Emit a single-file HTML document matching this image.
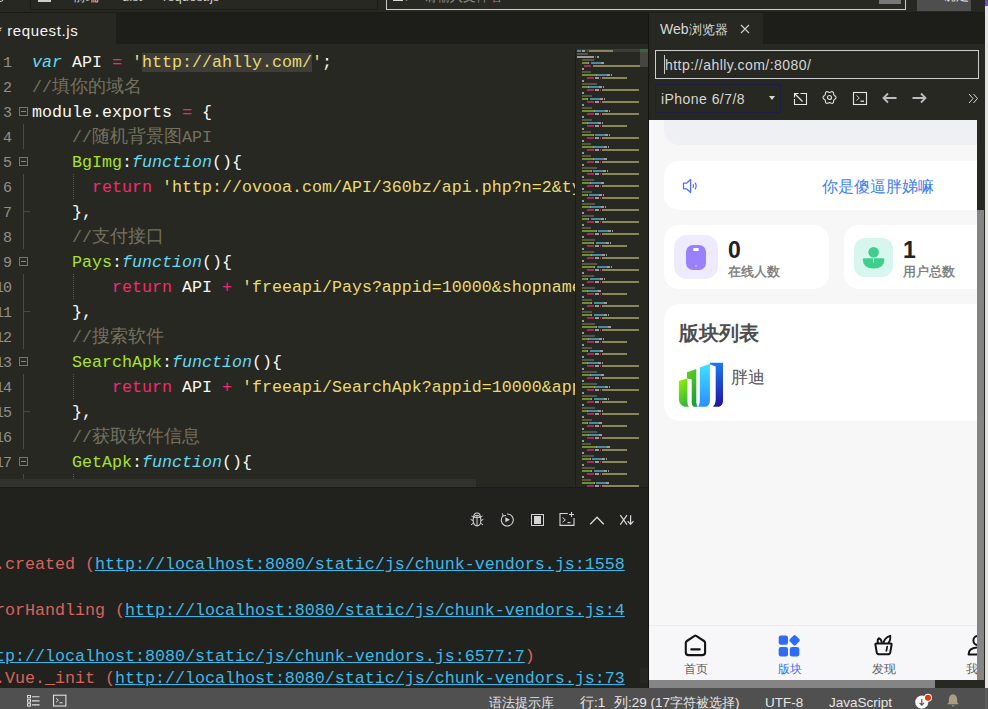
<!DOCTYPE html>
<html><head><meta charset="utf-8">
<style>
*{margin:0;padding:0;box-sizing:border-box}
html,body{width:988px;height:709px;overflow:hidden;background:#272822;font-family:"Liberation Sans",sans-serif}
.a{position:absolute}
.mono{font-family:"Liberation Mono",monospace;font-size:16.66px;white-space:pre;line-height:25px}
.cj{font-size:18px}
.ln{position:absolute;left:-9px;width:20px;text-align:right;color:#90908a;font-family:"Liberation Mono",monospace;font-size:15px;letter-spacing:-1px;line-height:25px;margin-top:2px}
.code{position:absolute;left:32px;color:#f8f8f2;margin-top:1px}
.k{color:#f92672}.s{color:#e6db74}.c{color:#75715e}.f{color:#66d9ef;font-style:italic}.g{color:#a6e22e}
.fold{position:absolute;left:19px;width:9px;height:9px;border:1px solid #75756e}
.fold:after{content:"";position:absolute;left:1px;top:3px;width:5px;height:1px;background:#8a8a84}
.guide{position:absolute;left:23px;width:1px;background:#4a4a44}
.dots{position:absolute;left:73px;width:1px;border-left:1px dotted #5a5a52}
</style></head>
<body>
<!-- top strip -->
<!-- top strip -->
<div class="a" style="left:0;top:0;width:988px;height:12px;background:#272822"></div>
<div class="a" style="left:0;top:12px;width:988px;height:1px;background:#1a1b17"></div>
<div class="a" style="left:-6px;top:-8px;width:11px;height:10px;border:1.5px solid #d8d8d8;border-radius:5px"></div>
<div class="a" style="left:30px;top:-2px;width:348px;height:12px;border:1px solid #1b1c18"></div>
<div class="a" style="left:38px;top:0;width:13px;height:1.5px;background:#cfcfcf"></div>
<div class="a" style="left:73px;top:-11px;font-size:13px;line-height:16px;color:#d0d0d0;white-space:nowrap">前端</div>
<div class="a" style="left:122px;top:-11px;font-size:13px;line-height:16px;color:#d0d0d0;white-space:nowrap">dist</div>
<div class="a" style="left:163px;top:-11px;font-size:13px;line-height:16px;color:#d0d0d0;white-space:nowrap">request.js</div>
<div class="a" style="left:386px;top:-2px;width:520px;height:12px;border:1.5px solid #cdcdcd"></div>
<div class="a" style="left:393px;top:-1px;width:10px;height:2px;border-bottom:1.5px solid #d8d8d8;border-left:1.5px solid #d8d8d8"></div>
<div class="a" style="left:405px;top:-3px;width:3px;height:4px;border-right:1.2px solid #d8d8d8;border-radius:0 0 3px 0"></div>
<div class="a" style="left:424px;top:-11px;font-size:13px;line-height:16px;color:#8a8a8a;white-space:nowrap">请输入文件名</div>
<div class="a" style="left:879px;top:0;width:22px;height:4px;background:#777"></div>
<div class="a" style="left:917px;top:0;width:54px;height:11px;background:#4e4e4e"></div>
<div class="a" style="left:943px;top:-12px;font-size:13px;line-height:16px;color:#e0e0e0;white-space:nowrap">确定</div>

<!-- tab bar -->
<div class="a" style="left:0;top:13px;width:988px;height:31px;background:#1d1e1a"></div>
<div class="a" style="left:0;top:13px;width:116px;height:31px;background:#272822"></div>
<div class="a" style="left:-4px;top:15px;height:30px;line-height:32px;font-size:15px;letter-spacing:0.6px;color:#f4f4f4">* request.js</div>
<!-- editor -->
<div class="a" style="left:0;top:44px;width:648px;height:443px;background:#272822"></div>
<div class="a" style="left:0;top:43px;width:576px;height:436px;overflow:hidden">
<div class="ln" style="top:6px">1</div>
<div class="code mono" style="top:6px"><span class="f">var</span> API <span class="k">=</span> <span class="s">'<span style="background:#3e3d37">http://ahlly.com/</span>'</span>;</div>
<div class="ln" style="top:31px">2</div>
<div class="code mono" style="top:31px"><span class="c">//<span class="cj">填你的域名</span></span></div>
<div class="ln" style="top:56px">3</div>
<div class="code mono" style="top:56px">module.exports <span class="k">=</span> {</div>
<div class="ln" style="top:81px">4</div>
<div class="code mono" style="top:81px">    <span class="c">//<span class="cj">随机背景图</span>API</span></div>
<div class="ln" style="top:106px">5</div>
<div class="code mono" style="top:106px">    <span class="g">BgImg</span>:<span class="f">function</span>(){</div>
<div class="ln" style="top:131px">6</div>
<div class="code mono" style="top:131px">      <span class="k">return</span> <span class="s">'http://ovooa.com/API/360bz/api.php?n=2&amp;type=json'</span></div>
<div class="ln" style="top:156px">7</div>
<div class="code mono" style="top:156px">    },</div>
<div class="ln" style="top:181px">8</div>
<div class="code mono" style="top:181px">    <span class="c">//<span class="cj">支付接口</span></span></div>
<div class="ln" style="top:206px">9</div>
<div class="code mono" style="top:206px">    <span class="g">Pays</span>:<span class="f">function</span>(){</div>
<div class="ln" style="top:231px">10</div>
<div class="code mono" style="top:231px">        <span class="k">return</span> API <span class="k">+</span> <span class="s">'freeapi/Pays?appid=10000&amp;shopname=xxxxxxxx'</span></div>
<div class="ln" style="top:256px">11</div>
<div class="code mono" style="top:256px">    },</div>
<div class="ln" style="top:281px">12</div>
<div class="code mono" style="top:281px">    <span class="c">//<span class="cj">搜索软件</span></span></div>
<div class="ln" style="top:306px">13</div>
<div class="code mono" style="top:306px">    <span class="g">SearchApk</span>:<span class="f">function</span>(){</div>
<div class="ln" style="top:331px">14</div>
<div class="code mono" style="top:331px">        <span class="k">return</span> API <span class="k">+</span> <span class="s">'freeapi/SearchApk?appid=10000&amp;appname=xxxx'</span></div>
<div class="ln" style="top:356px">15</div>
<div class="code mono" style="top:356px">    },</div>
<div class="ln" style="top:381px">16</div>
<div class="code mono" style="top:381px">    <span class="c">//<span class="cj">获取软件信息</span></span></div>
<div class="ln" style="top:406px">17</div>
<div class="code mono" style="top:406px">    <span class="g">GetApk</span>:<span class="f">function</span>(){</div>
<div class="ln" style="top:431px">18</div>
<div class="code mono" style="top:431px">        <span class="k">return</span> API <span class="k">+</span> <span class="s">'freeapi/GetApk?appid=10000'</span></div>
<div class="fold" style="top:64px"></div>
<div class="fold" style="top:114px"></div>
<div class="fold" style="top:214px"></div>
<div class="fold" style="top:314px"></div>
<div class="fold" style="top:414px"></div>
<div class="guide" style="top:81px;height:25px"></div>
<div class="guide" style="top:131px;height:75px"></div>
<div class="guide" style="top:231px;height:75px"></div>
<div class="guide" style="top:331px;height:75px"></div>
<div class="guide" style="top:431px;height:25px"></div>
<div class="a" style="left:24px;top:168px;width:6px;height:1px;background:#4a4a44"></div>
<div class="a" style="left:24px;top:268px;width:6px;height:1px;background:#4a4a44"></div>
<div class="a" style="left:24px;top:368px;width:6px;height:1px;background:#4a4a44"></div>
<div class="dots" style="top:131px;height:25px"></div>
<div class="dots" style="top:231px;height:25px"></div>
<div class="dots" style="top:331px;height:25px"></div>
<div class="dots" style="top:431px;height:25px"></div>
</div>
<div class="a" style="left:575px;top:49px;width:1px;height:438px;background:#1c1d19"></div>
<div class="a" style="left:577px;top:49px;width:63px;height:3px;background:#3d3c37"></div>
<div class="a" style="left:640px;top:49px;width:8px;height:3px;background:#2f6b3b"></div>
<div class="a" style="left:640px;top:52px;width:8px;height:15px;background:#464641"></div>
<div class="a" style="left:577px;top:50px;width:4px;height:2px;background:#478b9d"></div>
<div class="a" style="left:582px;top:50px;width:3px;height:2px;background:#9a9a98"></div>
<div class="a" style="left:587px;top:50px;width:1px;height:2px;background:#9e2f58"></div>
<div class="a" style="left:589px;top:50px;width:24px;height:2px;background:#8b8657"></div>
<div class="a" style="left:577px;top:53px;width:11px;height:2px;background:#57544a"></div>
<div class="a" style="left:577px;top:56px;width:17px;height:2px;background:#9a9a98"></div>
<div class="a" style="left:595px;top:56px;width:1px;height:2px;background:#9e2f58"></div>
<div class="a" style="left:597px;top:56px;width:2px;height:2px;background:#9a9a98"></div>
<div class="a" style="left:582px;top:59px;width:12px;height:2px;background:#57544a"></div>
<div class="a" style="left:582px;top:62px;width:6px;height:2px;background:#6b8f2c"></div>
<div class="a" style="left:588px;top:62px;width:1px;height:2px;background:#9a9a98"></div>
<div class="a" style="left:591px;top:62px;width:10px;height:2px;background:#478b9d"></div>
<div class="a" style="left:601px;top:62px;width:3px;height:2px;background:#9a9a98"></div>
<div class="a" style="left:584px;top:65px;width:7px;height:2px;background:#9e2f58"></div>
<div class="a" style="left:593px;top:65px;width:47px;height:2px;background:#8b8657"></div>
<div class="a" style="left:582px;top:68px;width:2px;height:2px;background:#9a9a98"></div>
<div class="a" style="left:582px;top:71px;width:9px;height:2px;background:#57544a"></div>
<div class="a" style="left:582px;top:74px;width:14px;height:2px;background:#6b8f2c"></div>
<div class="a" style="left:596px;top:74px;width:1px;height:2px;background:#9a9a98"></div>
<div class="a" style="left:597px;top:74px;width:10px;height:2px;background:#478b9d"></div>
<div class="a" style="left:607px;top:74px;width:3px;height:2px;background:#9a9a98"></div>
<div class="a" style="left:611px;top:74px;width:1px;height:2px;background:#9a9a98"></div>
<div class="a" style="left:587px;top:77px;width:7px;height:2px;background:#9e2f58"></div>
<div class="a" style="left:595px;top:77px;width:4px;height:2px;background:#9a9a98"></div>
<div class="a" style="left:600px;top:77px;width:1px;height:2px;background:#9e2f58"></div>
<div class="a" style="left:602px;top:77px;width:25px;height:2px;background:#8b8657"></div>
<div class="a" style="left:582px;top:80px;width:2px;height:2px;background:#9a9a98"></div>
<div class="a" style="left:582px;top:83px;width:15px;height:2px;background:#57544a"></div>
<div class="a" style="left:582px;top:86px;width:6px;height:2px;background:#6b8f2c"></div>
<div class="a" style="left:588px;top:86px;width:1px;height:2px;background:#9a9a98"></div>
<div class="a" style="left:589px;top:86px;width:10px;height:2px;background:#478b9d"></div>
<div class="a" style="left:599px;top:86px;width:3px;height:2px;background:#9a9a98"></div>
<div class="a" style="left:603px;top:86px;width:1px;height:2px;background:#9a9a98"></div>
<div class="a" style="left:587px;top:89px;width:7px;height:2px;background:#9e2f58"></div>
<div class="a" style="left:595px;top:89px;width:4px;height:2px;background:#9a9a98"></div>
<div class="a" style="left:600px;top:89px;width:1px;height:2px;background:#9e2f58"></div>
<div class="a" style="left:602px;top:89px;width:37px;height:2px;background:#8b8657"></div>
<div class="a" style="left:582px;top:92px;width:2px;height:2px;background:#9a9a98"></div>
<div class="a" style="left:582px;top:95px;width:10px;height:2px;background:#57544a"></div>
<div class="a" style="left:582px;top:98px;width:5px;height:2px;background:#6b8f2c"></div>
<div class="a" style="left:587px;top:98px;width:1px;height:2px;background:#9a9a98"></div>
<div class="a" style="left:590px;top:98px;width:10px;height:2px;background:#478b9d"></div>
<div class="a" style="left:600px;top:98px;width:3px;height:2px;background:#9a9a98"></div>
<div class="a" style="left:604px;top:98px;width:1px;height:2px;background:#9a9a98"></div>
<div class="a" style="left:587px;top:101px;width:7px;height:2px;background:#9e2f58"></div>
<div class="a" style="left:595px;top:101px;width:4px;height:2px;background:#9a9a98"></div>
<div class="a" style="left:600px;top:101px;width:1px;height:2px;background:#9e2f58"></div>
<div class="a" style="left:602px;top:101px;width:37px;height:2px;background:#8b8657"></div>
<div class="a" style="left:582px;top:104px;width:2px;height:2px;background:#9a9a98"></div>
<div class="a" style="left:582px;top:107px;width:10px;height:2px;background:#57544a"></div>
<div class="a" style="left:582px;top:110px;width:12px;height:2px;background:#6b8f2c"></div>
<div class="a" style="left:594px;top:110px;width:1px;height:2px;background:#9a9a98"></div>
<div class="a" style="left:595px;top:110px;width:10px;height:2px;background:#478b9d"></div>
<div class="a" style="left:605px;top:110px;width:3px;height:2px;background:#9a9a98"></div>
<div class="a" style="left:609px;top:110px;width:1px;height:2px;background:#9a9a98"></div>
<div class="a" style="left:587px;top:113px;width:7px;height:2px;background:#9e2f58"></div>
<div class="a" style="left:595px;top:113px;width:4px;height:2px;background:#9a9a98"></div>
<div class="a" style="left:600px;top:113px;width:1px;height:2px;background:#9e2f58"></div>
<div class="a" style="left:602px;top:113px;width:37px;height:2px;background:#8b8657"></div>
<div class="a" style="left:582px;top:116px;width:2px;height:2px;background:#9a9a98"></div>
<div class="a" style="left:582px;top:119px;width:10px;height:2px;background:#57544a"></div>
<div class="a" style="left:582px;top:122px;width:5px;height:2px;background:#6b8f2c"></div>
<div class="a" style="left:587px;top:122px;width:1px;height:2px;background:#9a9a98"></div>
<div class="a" style="left:588px;top:122px;width:10px;height:2px;background:#478b9d"></div>
<div class="a" style="left:598px;top:122px;width:3px;height:2px;background:#9a9a98"></div>
<div class="a" style="left:602px;top:122px;width:1px;height:2px;background:#9a9a98"></div>
<div class="a" style="left:587px;top:125px;width:7px;height:2px;background:#9e2f58"></div>
<div class="a" style="left:595px;top:125px;width:4px;height:2px;background:#9a9a98"></div>
<div class="a" style="left:600px;top:125px;width:1px;height:2px;background:#9e2f58"></div>
<div class="a" style="left:602px;top:125px;width:25px;height:2px;background:#8b8657"></div>
<div class="a" style="left:582px;top:128px;width:2px;height:2px;background:#9a9a98"></div>
<div class="a" style="left:582px;top:131px;width:9px;height:2px;background:#57544a"></div>
<div class="a" style="left:582px;top:134px;width:11px;height:2px;background:#6b8f2c"></div>
<div class="a" style="left:593px;top:134px;width:1px;height:2px;background:#9a9a98"></div>
<div class="a" style="left:595px;top:134px;width:10px;height:2px;background:#478b9d"></div>
<div class="a" style="left:605px;top:134px;width:3px;height:2px;background:#9a9a98"></div>
<div class="a" style="left:609px;top:134px;width:1px;height:2px;background:#9a9a98"></div>
<div class="a" style="left:587px;top:137px;width:7px;height:2px;background:#9e2f58"></div>
<div class="a" style="left:595px;top:137px;width:4px;height:2px;background:#9a9a98"></div>
<div class="a" style="left:600px;top:137px;width:1px;height:2px;background:#9e2f58"></div>
<div class="a" style="left:602px;top:137px;width:37px;height:2px;background:#8b8657"></div>
<div class="a" style="left:582px;top:140px;width:2px;height:2px;background:#9a9a98"></div>
<div class="a" style="left:582px;top:143px;width:9px;height:2px;background:#57544a"></div>
<div class="a" style="left:582px;top:146px;width:11px;height:2px;background:#6b8f2c"></div>
<div class="a" style="left:593px;top:146px;width:1px;height:2px;background:#9a9a98"></div>
<div class="a" style="left:594px;top:146px;width:10px;height:2px;background:#478b9d"></div>
<div class="a" style="left:604px;top:146px;width:3px;height:2px;background:#9a9a98"></div>
<div class="a" style="left:608px;top:146px;width:1px;height:2px;background:#9a9a98"></div>
<div class="a" style="left:587px;top:149px;width:7px;height:2px;background:#9e2f58"></div>
<div class="a" style="left:595px;top:149px;width:4px;height:2px;background:#9a9a98"></div>
<div class="a" style="left:600px;top:149px;width:1px;height:2px;background:#9e2f58"></div>
<div class="a" style="left:602px;top:149px;width:37px;height:2px;background:#8b8657"></div>
<div class="a" style="left:582px;top:152px;width:2px;height:2px;background:#9a9a98"></div>
<div class="a" style="left:582px;top:155px;width:9px;height:2px;background:#57544a"></div>
<div class="a" style="left:582px;top:158px;width:11px;height:2px;background:#6b8f2c"></div>
<div class="a" style="left:593px;top:158px;width:1px;height:2px;background:#9a9a98"></div>
<div class="a" style="left:594px;top:158px;width:10px;height:2px;background:#478b9d"></div>
<div class="a" style="left:604px;top:158px;width:3px;height:2px;background:#9a9a98"></div>
<div class="a" style="left:587px;top:161px;width:7px;height:2px;background:#9e2f58"></div>
<div class="a" style="left:595px;top:161px;width:4px;height:2px;background:#9a9a98"></div>
<div class="a" style="left:600px;top:161px;width:1px;height:2px;background:#9e2f58"></div>
<div class="a" style="left:602px;top:161px;width:37px;height:2px;background:#8b8657"></div>
<div class="a" style="left:582px;top:164px;width:2px;height:2px;background:#9a9a98"></div>
<div class="a" style="left:582px;top:167px;width:15px;height:2px;background:#57544a"></div>
<div class="a" style="left:582px;top:170px;width:9px;height:2px;background:#6b8f2c"></div>
<div class="a" style="left:591px;top:170px;width:1px;height:2px;background:#9a9a98"></div>
<div class="a" style="left:593px;top:170px;width:10px;height:2px;background:#478b9d"></div>
<div class="a" style="left:603px;top:170px;width:3px;height:2px;background:#9a9a98"></div>
<div class="a" style="left:607px;top:170px;width:1px;height:2px;background:#9a9a98"></div>
<div class="a" style="left:587px;top:173px;width:7px;height:2px;background:#9e2f58"></div>
<div class="a" style="left:595px;top:173px;width:4px;height:2px;background:#9a9a98"></div>
<div class="a" style="left:600px;top:173px;width:1px;height:2px;background:#9e2f58"></div>
<div class="a" style="left:602px;top:173px;width:37px;height:2px;background:#8b8657"></div>
<div class="a" style="left:582px;top:176px;width:2px;height:2px;background:#9a9a98"></div>
<div class="a" style="left:582px;top:179px;width:12px;height:2px;background:#57544a"></div>
<div class="a" style="left:582px;top:182px;width:8px;height:2px;background:#6b8f2c"></div>
<div class="a" style="left:590px;top:182px;width:1px;height:2px;background:#9a9a98"></div>
<div class="a" style="left:591px;top:182px;width:10px;height:2px;background:#478b9d"></div>
<div class="a" style="left:601px;top:182px;width:3px;height:2px;background:#9a9a98"></div>
<div class="a" style="left:587px;top:185px;width:7px;height:2px;background:#9e2f58"></div>
<div class="a" style="left:595px;top:185px;width:4px;height:2px;background:#9a9a98"></div>
<div class="a" style="left:600px;top:185px;width:1px;height:2px;background:#9e2f58"></div>
<div class="a" style="left:602px;top:185px;width:37px;height:2px;background:#8b8657"></div>
<div class="a" style="left:582px;top:188px;width:2px;height:2px;background:#9a9a98"></div>
<div class="a" style="left:582px;top:191px;width:10px;height:2px;background:#57544a"></div>
<div class="a" style="left:582px;top:194px;width:5px;height:2px;background:#6b8f2c"></div>
<div class="a" style="left:587px;top:194px;width:1px;height:2px;background:#9a9a98"></div>
<div class="a" style="left:589px;top:194px;width:10px;height:2px;background:#478b9d"></div>
<div class="a" style="left:599px;top:194px;width:3px;height:2px;background:#9a9a98"></div>
<div class="a" style="left:603px;top:194px;width:1px;height:2px;background:#9a9a98"></div>
<div class="a" style="left:587px;top:197px;width:7px;height:2px;background:#9e2f58"></div>
<div class="a" style="left:595px;top:197px;width:4px;height:2px;background:#9a9a98"></div>
<div class="a" style="left:600px;top:197px;width:1px;height:2px;background:#9e2f58"></div>
<div class="a" style="left:602px;top:197px;width:37px;height:2px;background:#8b8657"></div>
<div class="a" style="left:582px;top:200px;width:2px;height:2px;background:#9a9a98"></div>
<div class="a" style="left:582px;top:203px;width:13px;height:2px;background:#57544a"></div>
<div class="a" style="left:582px;top:206px;width:8px;height:2px;background:#6b8f2c"></div>
<div class="a" style="left:590px;top:206px;width:1px;height:2px;background:#9a9a98"></div>
<div class="a" style="left:591px;top:206px;width:10px;height:2px;background:#478b9d"></div>
<div class="a" style="left:601px;top:206px;width:3px;height:2px;background:#9a9a98"></div>
<div class="a" style="left:605px;top:206px;width:1px;height:2px;background:#9a9a98"></div>
<div class="a" style="left:587px;top:209px;width:7px;height:2px;background:#9e2f58"></div>
<div class="a" style="left:595px;top:209px;width:4px;height:2px;background:#9a9a98"></div>
<div class="a" style="left:600px;top:209px;width:1px;height:2px;background:#9e2f58"></div>
<div class="a" style="left:602px;top:209px;width:37px;height:2px;background:#8b8657"></div>
<div class="a" style="left:582px;top:212px;width:2px;height:2px;background:#9a9a98"></div>
<div class="a" style="left:582px;top:215px;width:12px;height:2px;background:#57544a"></div>
<div class="a" style="left:582px;top:218px;width:6px;height:2px;background:#6b8f2c"></div>
<div class="a" style="left:588px;top:218px;width:1px;height:2px;background:#9a9a98"></div>
<div class="a" style="left:591px;top:218px;width:10px;height:2px;background:#478b9d"></div>
<div class="a" style="left:601px;top:218px;width:3px;height:2px;background:#9a9a98"></div>
<div class="a" style="left:605px;top:218px;width:1px;height:2px;background:#9a9a98"></div>
<div class="a" style="left:587px;top:221px;width:7px;height:2px;background:#9e2f58"></div>
<div class="a" style="left:595px;top:221px;width:4px;height:2px;background:#9a9a98"></div>
<div class="a" style="left:600px;top:221px;width:1px;height:2px;background:#9e2f58"></div>
<div class="a" style="left:602px;top:221px;width:37px;height:2px;background:#8b8657"></div>
<div class="a" style="left:582px;top:224px;width:2px;height:2px;background:#9a9a98"></div>
<div class="a" style="left:582px;top:227px;width:9px;height:2px;background:#57544a"></div>
<div class="a" style="left:582px;top:230px;width:14px;height:2px;background:#6b8f2c"></div>
<div class="a" style="left:596px;top:230px;width:1px;height:2px;background:#9a9a98"></div>
<div class="a" style="left:598px;top:230px;width:10px;height:2px;background:#478b9d"></div>
<div class="a" style="left:608px;top:230px;width:3px;height:2px;background:#9a9a98"></div>
<div class="a" style="left:612px;top:230px;width:1px;height:2px;background:#9a9a98"></div>
<div class="a" style="left:587px;top:233px;width:7px;height:2px;background:#9e2f58"></div>
<div class="a" style="left:595px;top:233px;width:4px;height:2px;background:#9a9a98"></div>
<div class="a" style="left:600px;top:233px;width:1px;height:2px;background:#9e2f58"></div>
<div class="a" style="left:602px;top:233px;width:37px;height:2px;background:#8b8657"></div>
<div class="a" style="left:582px;top:236px;width:2px;height:2px;background:#9a9a98"></div>
<div class="a" style="left:582px;top:239px;width:13px;height:2px;background:#57544a"></div>
<div class="a" style="left:582px;top:242px;width:11px;height:2px;background:#6b8f2c"></div>
<div class="a" style="left:593px;top:242px;width:1px;height:2px;background:#9a9a98"></div>
<div class="a" style="left:596px;top:242px;width:10px;height:2px;background:#478b9d"></div>
<div class="a" style="left:606px;top:242px;width:3px;height:2px;background:#9a9a98"></div>
<div class="a" style="left:610px;top:242px;width:1px;height:2px;background:#9a9a98"></div>
<div class="a" style="left:587px;top:245px;width:7px;height:2px;background:#9e2f58"></div>
<div class="a" style="left:595px;top:245px;width:4px;height:2px;background:#9a9a98"></div>
<div class="a" style="left:600px;top:245px;width:1px;height:2px;background:#9e2f58"></div>
<div class="a" style="left:602px;top:245px;width:25px;height:2px;background:#8b8657"></div>
<div class="a" style="left:582px;top:248px;width:2px;height:2px;background:#9a9a98"></div>
<div class="a" style="left:582px;top:251px;width:12px;height:2px;background:#57544a"></div>
<div class="a" style="left:582px;top:254px;width:9px;height:2px;background:#6b8f2c"></div>
<div class="a" style="left:591px;top:254px;width:1px;height:2px;background:#9a9a98"></div>
<div class="a" style="left:592px;top:254px;width:10px;height:2px;background:#478b9d"></div>
<div class="a" style="left:602px;top:254px;width:3px;height:2px;background:#9a9a98"></div>
<div class="a" style="left:606px;top:254px;width:1px;height:2px;background:#9a9a98"></div>
<div class="a" style="left:587px;top:257px;width:7px;height:2px;background:#9e2f58"></div>
<div class="a" style="left:595px;top:257px;width:4px;height:2px;background:#9a9a98"></div>
<div class="a" style="left:600px;top:257px;width:1px;height:2px;background:#9e2f58"></div>
<div class="a" style="left:602px;top:257px;width:37px;height:2px;background:#8b8657"></div>
<div class="a" style="left:582px;top:260px;width:2px;height:2px;background:#9a9a98"></div>
<div class="a" style="left:582px;top:263px;width:15px;height:2px;background:#57544a"></div>
<div class="a" style="left:582px;top:266px;width:12px;height:2px;background:#6b8f2c"></div>
<div class="a" style="left:594px;top:266px;width:1px;height:2px;background:#9a9a98"></div>
<div class="a" style="left:597px;top:266px;width:10px;height:2px;background:#478b9d"></div>
<div class="a" style="left:607px;top:266px;width:3px;height:2px;background:#9a9a98"></div>
<div class="a" style="left:611px;top:266px;width:1px;height:2px;background:#9a9a98"></div>
<div class="a" style="left:587px;top:269px;width:7px;height:2px;background:#9e2f58"></div>
<div class="a" style="left:595px;top:269px;width:4px;height:2px;background:#9a9a98"></div>
<div class="a" style="left:600px;top:269px;width:1px;height:2px;background:#9e2f58"></div>
<div class="a" style="left:602px;top:269px;width:37px;height:2px;background:#8b8657"></div>
<div class="a" style="left:582px;top:272px;width:2px;height:2px;background:#9a9a98"></div>
<div class="a" style="left:582px;top:275px;width:12px;height:2px;background:#57544a"></div>
<div class="a" style="left:582px;top:278px;width:5px;height:2px;background:#6b8f2c"></div>
<div class="a" style="left:587px;top:278px;width:1px;height:2px;background:#9a9a98"></div>
<div class="a" style="left:590px;top:278px;width:10px;height:2px;background:#478b9d"></div>
<div class="a" style="left:600px;top:278px;width:3px;height:2px;background:#9a9a98"></div>
<div class="a" style="left:604px;top:278px;width:1px;height:2px;background:#9a9a98"></div>
<div class="a" style="left:587px;top:281px;width:7px;height:2px;background:#9e2f58"></div>
<div class="a" style="left:595px;top:281px;width:4px;height:2px;background:#9a9a98"></div>
<div class="a" style="left:600px;top:281px;width:1px;height:2px;background:#9e2f58"></div>
<div class="a" style="left:602px;top:281px;width:37px;height:2px;background:#8b8657"></div>
<div class="a" style="left:582px;top:284px;width:2px;height:2px;background:#9a9a98"></div>
<div class="a" style="left:582px;top:287px;width:13px;height:2px;background:#57544a"></div>
<div class="a" style="left:582px;top:290px;width:5px;height:2px;background:#6b8f2c"></div>
<div class="a" style="left:587px;top:290px;width:1px;height:2px;background:#9a9a98"></div>
<div class="a" style="left:588px;top:290px;width:10px;height:2px;background:#478b9d"></div>
<div class="a" style="left:598px;top:290px;width:3px;height:2px;background:#9a9a98"></div>
<div class="a" style="left:587px;top:293px;width:7px;height:2px;background:#9e2f58"></div>
<div class="a" style="left:595px;top:293px;width:4px;height:2px;background:#9a9a98"></div>
<div class="a" style="left:600px;top:293px;width:1px;height:2px;background:#9e2f58"></div>
<div class="a" style="left:602px;top:293px;width:25px;height:2px;background:#8b8657"></div>
<div class="a" style="left:582px;top:296px;width:2px;height:2px;background:#9a9a98"></div>
<div class="a" style="left:582px;top:299px;width:10px;height:2px;background:#57544a"></div>
<div class="a" style="left:582px;top:302px;width:9px;height:2px;background:#6b8f2c"></div>
<div class="a" style="left:591px;top:302px;width:1px;height:2px;background:#9a9a98"></div>
<div class="a" style="left:594px;top:302px;width:10px;height:2px;background:#478b9d"></div>
<div class="a" style="left:604px;top:302px;width:3px;height:2px;background:#9a9a98"></div>
<div class="a" style="left:587px;top:305px;width:7px;height:2px;background:#9e2f58"></div>
<div class="a" style="left:595px;top:305px;width:4px;height:2px;background:#9a9a98"></div>
<div class="a" style="left:600px;top:305px;width:1px;height:2px;background:#9e2f58"></div>
<div class="a" style="left:602px;top:305px;width:37px;height:2px;background:#8b8657"></div>
<div class="a" style="left:582px;top:308px;width:2px;height:2px;background:#9a9a98"></div>
<div class="a" style="left:582px;top:311px;width:10px;height:2px;background:#57544a"></div>
<div class="a" style="left:582px;top:314px;width:9px;height:2px;background:#6b8f2c"></div>
<div class="a" style="left:591px;top:314px;width:1px;height:2px;background:#9a9a98"></div>
<div class="a" style="left:594px;top:314px;width:10px;height:2px;background:#478b9d"></div>
<div class="a" style="left:604px;top:314px;width:3px;height:2px;background:#9a9a98"></div>
<div class="a" style="left:608px;top:314px;width:1px;height:2px;background:#9a9a98"></div>
<div class="a" style="left:587px;top:317px;width:7px;height:2px;background:#9e2f58"></div>
<div class="a" style="left:595px;top:317px;width:4px;height:2px;background:#9a9a98"></div>
<div class="a" style="left:600px;top:317px;width:1px;height:2px;background:#9e2f58"></div>
<div class="a" style="left:602px;top:317px;width:37px;height:2px;background:#8b8657"></div>
<div class="a" style="left:582px;top:320px;width:2px;height:2px;background:#9a9a98"></div>
<div class="a" style="left:582px;top:323px;width:13px;height:2px;background:#57544a"></div>
<div class="a" style="left:582px;top:326px;width:14px;height:2px;background:#6b8f2c"></div>
<div class="a" style="left:596px;top:326px;width:1px;height:2px;background:#9a9a98"></div>
<div class="a" style="left:598px;top:326px;width:10px;height:2px;background:#478b9d"></div>
<div class="a" style="left:608px;top:326px;width:3px;height:2px;background:#9a9a98"></div>
<div class="a" style="left:587px;top:329px;width:7px;height:2px;background:#9e2f58"></div>
<div class="a" style="left:595px;top:329px;width:4px;height:2px;background:#9a9a98"></div>
<div class="a" style="left:600px;top:329px;width:1px;height:2px;background:#9e2f58"></div>
<div class="a" style="left:602px;top:329px;width:37px;height:2px;background:#8b8657"></div>
<div class="a" style="left:582px;top:332px;width:2px;height:2px;background:#9a9a98"></div>
<div class="a" style="left:582px;top:335px;width:13px;height:2px;background:#57544a"></div>
<div class="a" style="left:582px;top:338px;width:6px;height:2px;background:#6b8f2c"></div>
<div class="a" style="left:588px;top:338px;width:1px;height:2px;background:#9a9a98"></div>
<div class="a" style="left:589px;top:338px;width:10px;height:2px;background:#478b9d"></div>
<div class="a" style="left:599px;top:338px;width:3px;height:2px;background:#9a9a98"></div>
<div class="a" style="left:603px;top:338px;width:1px;height:2px;background:#9a9a98"></div>
<div class="a" style="left:587px;top:341px;width:7px;height:2px;background:#9e2f58"></div>
<div class="a" style="left:595px;top:341px;width:4px;height:2px;background:#9a9a98"></div>
<div class="a" style="left:600px;top:341px;width:1px;height:2px;background:#9e2f58"></div>
<div class="a" style="left:602px;top:341px;width:25px;height:2px;background:#8b8657"></div>
<div class="a" style="left:582px;top:344px;width:2px;height:2px;background:#9a9a98"></div>
<div class="a" style="left:582px;top:347px;width:10px;height:2px;background:#57544a"></div>
<div class="a" style="left:582px;top:350px;width:5px;height:2px;background:#6b8f2c"></div>
<div class="a" style="left:587px;top:350px;width:1px;height:2px;background:#9a9a98"></div>
<div class="a" style="left:590px;top:350px;width:10px;height:2px;background:#478b9d"></div>
<div class="a" style="left:600px;top:350px;width:3px;height:2px;background:#9a9a98"></div>
<div class="a" style="left:587px;top:353px;width:7px;height:2px;background:#9e2f58"></div>
<div class="a" style="left:595px;top:353px;width:4px;height:2px;background:#9a9a98"></div>
<div class="a" style="left:600px;top:353px;width:1px;height:2px;background:#9e2f58"></div>
<div class="a" style="left:602px;top:353px;width:25px;height:2px;background:#8b8657"></div>
<div class="a" style="left:582px;top:356px;width:2px;height:2px;background:#9a9a98"></div>
<div class="a" style="left:582px;top:359px;width:12px;height:2px;background:#57544a"></div>
<div class="a" style="left:582px;top:362px;width:5px;height:2px;background:#6b8f2c"></div>
<div class="a" style="left:587px;top:362px;width:1px;height:2px;background:#9a9a98"></div>
<div class="a" style="left:588px;top:362px;width:10px;height:2px;background:#478b9d"></div>
<div class="a" style="left:598px;top:362px;width:3px;height:2px;background:#9a9a98"></div>
<div class="a" style="left:602px;top:362px;width:1px;height:2px;background:#9a9a98"></div>
<div class="a" style="left:587px;top:365px;width:7px;height:2px;background:#9e2f58"></div>
<div class="a" style="left:595px;top:365px;width:4px;height:2px;background:#9a9a98"></div>
<div class="a" style="left:600px;top:365px;width:1px;height:2px;background:#9e2f58"></div>
<div class="a" style="left:602px;top:365px;width:37px;height:2px;background:#8b8657"></div>
<div class="a" style="left:582px;top:368px;width:2px;height:2px;background:#9a9a98"></div>
<div class="a" style="left:582px;top:371px;width:15px;height:2px;background:#57544a"></div>
<div class="a" style="left:582px;top:374px;width:8px;height:2px;background:#6b8f2c"></div>
<div class="a" style="left:590px;top:374px;width:1px;height:2px;background:#9a9a98"></div>
<div class="a" style="left:591px;top:374px;width:10px;height:2px;background:#478b9d"></div>
<div class="a" style="left:601px;top:374px;width:3px;height:2px;background:#9a9a98"></div>
<div class="a" style="left:587px;top:377px;width:7px;height:2px;background:#9e2f58"></div>
<div class="a" style="left:595px;top:377px;width:4px;height:2px;background:#9a9a98"></div>
<div class="a" style="left:600px;top:377px;width:1px;height:2px;background:#9e2f58"></div>
<div class="a" style="left:602px;top:377px;width:37px;height:2px;background:#8b8657"></div>
<div class="a" style="left:582px;top:380px;width:2px;height:2px;background:#9a9a98"></div>
<div class="a" style="left:582px;top:383px;width:15px;height:2px;background:#57544a"></div>
<div class="a" style="left:582px;top:386px;width:12px;height:2px;background:#6b8f2c"></div>
<div class="a" style="left:594px;top:386px;width:1px;height:2px;background:#9a9a98"></div>
<div class="a" style="left:595px;top:386px;width:10px;height:2px;background:#478b9d"></div>
<div class="a" style="left:605px;top:386px;width:3px;height:2px;background:#9a9a98"></div>
<div class="a" style="left:609px;top:386px;width:1px;height:2px;background:#9a9a98"></div>
<div class="a" style="left:587px;top:389px;width:7px;height:2px;background:#9e2f58"></div>
<div class="a" style="left:595px;top:389px;width:4px;height:2px;background:#9a9a98"></div>
<div class="a" style="left:600px;top:389px;width:1px;height:2px;background:#9e2f58"></div>
<div class="a" style="left:602px;top:389px;width:37px;height:2px;background:#8b8657"></div>
<div class="a" style="left:582px;top:392px;width:2px;height:2px;background:#9a9a98"></div>
<div class="a" style="left:582px;top:395px;width:15px;height:2px;background:#57544a"></div>
<div class="a" style="left:582px;top:398px;width:9px;height:2px;background:#6b8f2c"></div>
<div class="a" style="left:591px;top:398px;width:1px;height:2px;background:#9a9a98"></div>
<div class="a" style="left:594px;top:398px;width:10px;height:2px;background:#478b9d"></div>
<div class="a" style="left:604px;top:398px;width:3px;height:2px;background:#9a9a98"></div>
<div class="a" style="left:608px;top:398px;width:1px;height:2px;background:#9a9a98"></div>
<div class="a" style="left:587px;top:401px;width:7px;height:2px;background:#9e2f58"></div>
<div class="a" style="left:595px;top:401px;width:4px;height:2px;background:#9a9a98"></div>
<div class="a" style="left:600px;top:401px;width:1px;height:2px;background:#9e2f58"></div>
<div class="a" style="left:602px;top:401px;width:25px;height:2px;background:#8b8657"></div>
<div class="a" style="left:582px;top:404px;width:2px;height:2px;background:#9a9a98"></div>
<div class="a" style="left:582px;top:407px;width:13px;height:2px;background:#57544a"></div>
<div class="a" style="left:582px;top:410px;width:5px;height:2px;background:#6b8f2c"></div>
<div class="a" style="left:587px;top:410px;width:1px;height:2px;background:#9a9a98"></div>
<div class="a" style="left:588px;top:410px;width:10px;height:2px;background:#478b9d"></div>
<div class="a" style="left:598px;top:410px;width:3px;height:2px;background:#9a9a98"></div>
<div class="a" style="left:602px;top:410px;width:1px;height:2px;background:#9a9a98"></div>
<div class="a" style="left:587px;top:413px;width:7px;height:2px;background:#9e2f58"></div>
<div class="a" style="left:595px;top:413px;width:4px;height:2px;background:#9a9a98"></div>
<div class="a" style="left:600px;top:413px;width:1px;height:2px;background:#9e2f58"></div>
<div class="a" style="left:602px;top:413px;width:37px;height:2px;background:#8b8657"></div>
<div class="a" style="left:582px;top:416px;width:2px;height:2px;background:#9a9a98"></div>
<div class="a" style="left:582px;top:419px;width:10px;height:2px;background:#57544a"></div>
<div class="a" style="left:582px;top:422px;width:5px;height:2px;background:#6b8f2c"></div>
<div class="a" style="left:587px;top:422px;width:1px;height:2px;background:#9a9a98"></div>
<div class="a" style="left:589px;top:422px;width:10px;height:2px;background:#478b9d"></div>
<div class="a" style="left:599px;top:422px;width:3px;height:2px;background:#9a9a98"></div>
<div class="a" style="left:587px;top:425px;width:7px;height:2px;background:#9e2f58"></div>
<div class="a" style="left:595px;top:425px;width:4px;height:2px;background:#9a9a98"></div>
<div class="a" style="left:600px;top:425px;width:1px;height:2px;background:#9e2f58"></div>
<div class="a" style="left:602px;top:425px;width:25px;height:2px;background:#8b8657"></div>
<div class="a" style="left:582px;top:428px;width:2px;height:2px;background:#9a9a98"></div>
<div class="a" style="left:582px;top:431px;width:15px;height:2px;background:#57544a"></div>
<div class="a" style="left:582px;top:434px;width:6px;height:2px;background:#6b8f2c"></div>
<div class="a" style="left:588px;top:434px;width:1px;height:2px;background:#9a9a98"></div>
<div class="a" style="left:589px;top:434px;width:10px;height:2px;background:#478b9d"></div>
<div class="a" style="left:599px;top:434px;width:3px;height:2px;background:#9a9a98"></div>
<div class="a" style="left:587px;top:437px;width:7px;height:2px;background:#9e2f58"></div>
<div class="a" style="left:595px;top:437px;width:4px;height:2px;background:#9a9a98"></div>
<div class="a" style="left:600px;top:437px;width:1px;height:2px;background:#9e2f58"></div>
<div class="a" style="left:602px;top:437px;width:37px;height:2px;background:#8b8657"></div>
<div class="a" style="left:582px;top:440px;width:2px;height:2px;background:#9a9a98"></div>
<div class="a" style="left:582px;top:443px;width:9px;height:2px;background:#57544a"></div>
<div class="a" style="left:582px;top:446px;width:14px;height:2px;background:#6b8f2c"></div>
<div class="a" style="left:596px;top:446px;width:1px;height:2px;background:#9a9a98"></div>
<div class="a" style="left:597px;top:446px;width:10px;height:2px;background:#478b9d"></div>
<div class="a" style="left:607px;top:446px;width:3px;height:2px;background:#9a9a98"></div>
<div class="a" style="left:587px;top:449px;width:7px;height:2px;background:#9e2f58"></div>
<div class="a" style="left:595px;top:449px;width:4px;height:2px;background:#9a9a98"></div>
<div class="a" style="left:600px;top:449px;width:1px;height:2px;background:#9e2f58"></div>
<div class="a" style="left:602px;top:449px;width:25px;height:2px;background:#8b8657"></div>
<div class="a" style="left:582px;top:452px;width:2px;height:2px;background:#9a9a98"></div>
<div class="a" style="left:582px;top:455px;width:12px;height:2px;background:#57544a"></div>
<div class="a" style="left:582px;top:458px;width:8px;height:2px;background:#6b8f2c"></div>
<div class="a" style="left:590px;top:458px;width:1px;height:2px;background:#9a9a98"></div>
<div class="a" style="left:592px;top:458px;width:10px;height:2px;background:#478b9d"></div>
<div class="a" style="left:602px;top:458px;width:3px;height:2px;background:#9a9a98"></div>
<div class="a" style="left:606px;top:458px;width:1px;height:2px;background:#9a9a98"></div>
<div class="a" style="left:587px;top:461px;width:7px;height:2px;background:#9e2f58"></div>
<div class="a" style="left:595px;top:461px;width:4px;height:2px;background:#9a9a98"></div>
<div class="a" style="left:600px;top:461px;width:1px;height:2px;background:#9e2f58"></div>
<div class="a" style="left:602px;top:461px;width:25px;height:2px;background:#8b8657"></div>
<div class="a" style="left:582px;top:464px;width:2px;height:2px;background:#9a9a98"></div>
<div class="a" style="left:582px;top:467px;width:13px;height:2px;background:#57544a"></div>
<div class="a" style="left:582px;top:470px;width:9px;height:2px;background:#6b8f2c"></div>
<div class="a" style="left:591px;top:470px;width:1px;height:2px;background:#9a9a98"></div>
<div class="a" style="left:594px;top:470px;width:10px;height:2px;background:#478b9d"></div>
<div class="a" style="left:604px;top:470px;width:3px;height:2px;background:#9a9a98"></div>
<div class="a" style="left:608px;top:470px;width:1px;height:2px;background:#9a9a98"></div>
<div class="a" style="left:587px;top:473px;width:7px;height:2px;background:#9e2f58"></div>
<div class="a" style="left:595px;top:473px;width:4px;height:2px;background:#9a9a98"></div>
<div class="a" style="left:600px;top:473px;width:1px;height:2px;background:#9e2f58"></div>
<div class="a" style="left:602px;top:473px;width:25px;height:2px;background:#8b8657"></div>
<div class="a" style="left:582px;top:476px;width:2px;height:2px;background:#9a9a98"></div>
<div class="a" style="left:582px;top:479px;width:9px;height:2px;background:#57544a"></div>
<div class="a" style="left:582px;top:482px;width:12px;height:2px;background:#6b8f2c"></div>
<div class="a" style="left:594px;top:482px;width:1px;height:2px;background:#9a9a98"></div>
<div class="a" style="left:596px;top:482px;width:10px;height:2px;background:#478b9d"></div>
<div class="a" style="left:606px;top:482px;width:3px;height:2px;background:#9a9a98"></div>
<div class="a" style="left:587px;top:485px;width:7px;height:2px;background:#9e2f58"></div>
<div class="a" style="left:595px;top:485px;width:4px;height:2px;background:#9a9a98"></div>
<div class="a" style="left:600px;top:485px;width:1px;height:2px;background:#9e2f58"></div>
<div class="a" style="left:602px;top:485px;width:37px;height:2px;background:#8b8657"></div>
<div class="a" style="left:0;top:479px;width:476px;height:8px;background:#31322d"></div>

<!-- console -->
<!-- console -->
<div class="a" style="left:0;top:487px;width:649px;height:201px;background:#21221d;overflow:hidden">
<svg class="a" style="left:468px;top:24px" width="18" height="18" viewBox="0 0 18 18">
 <path d="M5.6 6.2Q5.8 2 9 2Q12.2 2 12.4 6.2" fill="none" stroke="#d4d4d4" stroke-width="1.1"/>
 <ellipse cx="9" cy="9.6" rx="3.9" ry="5.3" fill="none" stroke="#d4d4d4" stroke-width="1.1"/>
 <path d="M9 4.6V14.9M5.4 6.3H12.6M5 9.5L2.6 8.4M13 9.5L15.4 8.4M5.2 12.3L3 13.8M12.8 12.3L15 13.8M5.6 6.4L3.4 5M12.4 6.4L14.6 5" stroke="#d4d4d4" stroke-width="1"/>
</svg>
<svg class="a" style="left:498px;top:24px" width="18" height="18" viewBox="0 0 18 18">
 <path d="M5.2 4.6A6 6 0 1 0 9 3" fill="none" stroke="#d4d4d4" stroke-width="1.1"/>
 <path d="M4.4 2.4L5.3 5L8 4.4" fill="none" stroke="#d4d4d4" stroke-width="1"/>
 <path d="M7.4 6.2L11.8 8.7L7.4 11.2Z" fill="#d8d8d8"/>
</svg>
<div class="a" style="left:531px;top:26.5px;width:12.5px;height:12.5px;border:1.3px solid #d4d4d4"></div>
<div class="a" style="left:533.5px;top:29px;width:7.5px;height:7.5px;background:#d6d6d6"></div>
<svg class="a" style="left:558px;top:25px" width="18" height="16" viewBox="0 0 18 16">
 <path d="M9.8 1.5H2V13.4H16V6" fill="none" stroke="#d8d8d8" stroke-width="1.1"/>
 <path d="M13.5 0V5M11 2.5H16" stroke="#d8d8d8" stroke-width="1.1"/>
 <path d="M4.6 5.6L7.3 7.9L4.6 10.2" fill="none" stroke="#d8d8d8" stroke-width="1"/>
 <path d="M9.5 10.6H12.5" stroke="#d8d8d8" stroke-width="1.1"/>
</svg>
<svg class="a" style="left:588px;top:25px" width="18" height="16" viewBox="0 0 18 16">
 <path d="M2.2 12.3L9 5.2L15.8 12.3" fill="none" stroke="#d8d8d8" stroke-width="1.3"/>
</svg>
<svg class="a" style="left:618px;top:25px" width="18" height="16" viewBox="0 0 18 16">
 <path d="M2.3 3.2L9 12.6M9 3.2L2.3 12.6" stroke="#d8d8d8" stroke-width="1.2"/>
 <path d="M12.6 3.2V12.2M9.7 9.2L12.6 12.4L15.5 9.2" fill="none" stroke="#d8d8d8" stroke-width="1.2"/>
</svg>
<div class="mono a" style="left:-5px;top:66px;line-height:23px;color:#d8625e">.created (<u style="color:#3fb8e8">http://localhost:8080/static/js/chunk-vendors.js:1558</u></div>
<div class="mono a" style="left:-5px;top:112px;line-height:23px;color:#d8625e">rorHandling (<u style="color:#3fb8e8">http://localhost:8080/static/js/chunk-vendors.js:4</u></div>
<div class="mono a" style="left:-5px;top:158px;line-height:23px;color:#d8625e"><u style="color:#3fb8e8">tp://localhost:8080/static/js/chunk-vendors.js:6577:7</u>)</div>
<div class="mono a" style="left:-5px;top:180px;line-height:23px;color:#d8625e">.Vue._init (<u style="color:#3fb8e8">http://localhost:8080/static/js/chunk-vendors.js:73</u></div>
<div class="a" style="left:640px;top:181px;width:8px;height:15px;background:#262723"></div>
</div>

<div class="a" style="left:0;top:487px;width:649px;height:1px;background:#1a1b17"></div>
<!-- browser panel -->
<div class="a" style="left:649px;top:13px;width:336px;height:31px;background:#1d1e1a"></div>
<div class="a" style="left:649px;top:13px;width:114px;height:31px;background:#272822"></div>
<div class="a" style="left:660px;top:14px;height:30px;line-height:31px;font-size:14px;color:#d8d8d8">Web<span style="font-size:13.3px">浏览器</span></div>
<div class="a" style="left:649px;top:44px;width:336px;height:76px;background:#272822"></div>
<!-- browser toolbar -->
<div class="a" style="left:740px;top:24px;width:10px;height:10px">
<svg width="10" height="10" viewBox="0 0 10 10" style="display:block"><path d="M1 1L9 9M9 1L1 9" stroke="#cfcfcf" stroke-width="1.1"/></svg></div>
<div class="a" style="left:655px;top:50px;width:324px;height:29px;border:1px solid #cdcdcd"></div>
<div class="a" style="left:664px;top:55px;width:1px;height:19px;background:#c8c8c8"></div>
<div class="a" style="left:665px;top:50px;height:29px;line-height:30px;font-size:14px;letter-spacing:0.45px;color:#d6d6d6">http://ahlly.com/:8080/</div>
<div class="a" style="left:655px;top:84px;width:126px;height:29px;border:1px solid #1d1d45"></div>
<div class="a" style="left:661px;top:84px;height:29px;line-height:30px;font-size:14px;letter-spacing:0.45px;color:#d6d6d6">iPhone 6/7/8</div>
<div class="a" style="left:769px;top:96px;width:0;height:0;border-left:3.5px solid transparent;border-right:3.5px solid transparent;border-top:4px solid #d8d8d8"></div>
<svg class="a" style="left:790px;top:89px" width="20" height="18" viewBox="0 0 20 18">
 <path d="M4.5 10V15.5H16.5V4.5H10.5" fill="none" stroke="#e6e6e6" stroke-width="1.1"/>
 <path d="M5 5L12.5 12.5" stroke="#e6e6e6" stroke-width="1.2"/>
 <path d="M4.5 8.6V4.5H8.6" fill="none" stroke="#e6e6e6" stroke-width="1.1"/>
</svg>
<svg class="a" style="left:821px;top:89px" width="17" height="17" viewBox="0 0 17 17">
 <path d="M15.05 8.50 L14.87 9.17 L14.40 9.75 L13.80 10.22 L13.24 10.61 L12.87 11.02 L12.70 11.55 L12.64 12.23 L12.54 12.98 L12.27 13.68 L11.78 14.17 L11.11 14.35 L10.36 14.24 L9.66 13.95 L9.04 13.66 L8.50 13.55 L7.96 13.66 L7.34 13.95 L6.64 14.24 L5.89 14.35 L5.23 14.17 L4.73 13.68 L4.46 12.98 L4.36 12.23 L4.30 11.55 L4.13 11.02 L3.76 10.61 L3.20 10.22 L2.60 9.75 L2.13 9.17 L1.95 8.50 L2.13 7.83 L2.60 7.25 L3.20 6.78 L3.76 6.39 L4.13 5.97 L4.30 5.45 L4.36 4.77 L4.46 4.02 L4.73 3.32 L5.22 2.83 L5.89 2.65 L6.64 2.76 L7.34 3.05 L7.96 3.34 L8.50 3.45 L9.04 3.34 L9.66 3.05 L10.36 2.76 L11.11 2.65 L11.78 2.83 L12.27 3.32 L12.54 4.02 L12.64 4.77 L12.70 5.45 L12.87 5.97 L13.24 6.39 L13.80 6.78 L14.40 7.25 L14.87 7.83 L15.05 8.50Z" fill="none" stroke="#dcdcdc" stroke-width="1.1" stroke-linejoin="round"/>
 <circle cx="8.5" cy="8.5" r="2" fill="none" stroke="#dcdcdc" stroke-width="1.2"/>
</svg>
<svg class="a" style="left:851px;top:90px" width="18" height="16" viewBox="0 0 18 16">
 <rect x="2.5" y="2.5" width="13" height="12" fill="none" stroke="#e6e6e6" stroke-width="1.1"/>
 <path d="M5.5 5.5L8.3 8L5.5 10.5" fill="none" stroke="#e0e0e0" stroke-width="0.9"/>
 <path d="M9.5 11.2H13" stroke="#e0e0e0" stroke-width="1.3"/>
</svg>
<svg class="a" style="left:881px;top:90px" width="17" height="16" viewBox="0 0 17 16">
 <path d="M2.5 8H15.5M7 3.5L2.5 8L7 12.5" fill="none" stroke="#bdbdbd" stroke-width="1.8"/>
</svg>
<svg class="a" style="left:911px;top:90px" width="17" height="16" viewBox="0 0 17 16">
 <path d="M1.5 8H14.5M10 3.5L14.5 8L10 12.5" fill="none" stroke="#bdbdbd" stroke-width="1.8"/>
</svg>
<svg class="a" style="left:966px;top:90px" width="14" height="16" viewBox="0 0 14 16">
 <path d="M3 4L7 8.5L3 13M7.5 4L11.5 8.5L7.5 13" fill="none" stroke="#d8d8d8" stroke-width="1"/>
</svg>

<!-- web content -->
<div class="a" style="left:649px;top:120px;width:328px;height:560px;overflow:hidden;background:#f7f7f7">
 <div class="a" style="left:15px;top:-30px;width:340px;height:55px;background:#eff0f3;border-radius:15px"></div>
 <div class="a" style="left:15px;top:41px;width:340px;height:49px;background:#fff;border-radius:15px"></div>
 <svg class="a" style="left:32px;top:57px" width="18" height="18" viewBox="0 0 18 18">
  <path d="M2.5 6.2H5.5L9.6 2.4V15.6L5.5 11.8H2.5Z" fill="none" stroke="#5571f5" stroke-width="1.3" stroke-linejoin="round"/>
  <path d="M12 7.2Q13.2 9 12 10.8" fill="none" stroke="#5571f5" stroke-width="1.2"/>
  <path d="M14 5.6Q16.3 9 14 12.4" fill="none" stroke="#5571f5" stroke-width="1.2"/>
 </svg>
 <div class="a" style="left:173px;top:57px;font-size:16px;line-height:20px;color:#3f7ef2;white-space:nowrap">你是傻逼胖娣嘛</div>
 <!-- stat cards -->
 <div class="a" style="left:15px;top:105px;width:165px;height:64px;background:#fff;border-radius:15px"></div>
 <div class="a" style="left:25px;top:115px;width:44px;height:44px;background:#efebfe;border-radius:13px"></div>
 <div class="a" style="left:37px;top:125px;width:20px;height:25px;background:#9a80fb;border-radius:7px"></div>
 <div class="a" style="left:44px;top:128px;width:6px;height:2.5px;background:#fff;border-radius:2px"></div>
 <div class="a" style="left:46px;top:145px;width:2px;height:2px;background:#c9bbfd;border-radius:1px"></div>
 <div class="a" style="left:79px;top:118px;font-size:23px;font-weight:bold;line-height:24px;color:#222">0</div>
 <div class="a" style="left:79px;top:144px;font-size:13px;font-weight:500;line-height:16px;color:#777;-webkit-text-stroke:0.35px #777;white-space:nowrap">在线人数</div>
 <div class="a" style="left:195px;top:105px;width:160px;height:64px;background:#fff;border-radius:15px"></div>
 <div class="a" style="left:205px;top:118px;width:39px;height:39px;background:#d7f6ee;border-radius:11px"></div>
 <svg class="a" style="left:205px;top:118px" width="39" height="39" viewBox="0 0 39 39">
  <circle cx="19.6" cy="14.2" r="5.3" fill="#3ecf8c"/>
  <path d="M8.8 21.6Q8.8 20.2 10.2 20.2H29Q30.4 20.2 30.4 21.6Q30.4 30.6 19.6 30.6Q8.8 30.6 8.8 21.6Z" fill="#3ecf8c"/>
  <path d="M19.1 20.5H20.1L19.8 25H19.4Z" fill="#e8fbf4"/>
 </svg>
 <div class="a" style="left:254px;top:118px;font-size:23px;font-weight:bold;line-height:24px;color:#222">1</div>
 <div class="a" style="left:254px;top:144px;font-size:13px;font-weight:500;line-height:16px;color:#777;-webkit-text-stroke:0.35px #777;white-space:nowrap">用户总数</div>
 <!-- block list -->
 <div class="a" style="left:15px;top:184px;width:340px;height:117px;background:#fff;border-radius:16px"></div>
 <div class="a" style="left:30px;top:201px;font-size:20px;font-weight:bold;line-height:24px;color:#4d4d4d;white-space:nowrap">版块列表</div>
 <svg class="a" style="left:26px;top:238px" width="55" height="55" viewBox="0 0 55 55">
  <defs>
   <linearGradient id="g1" x1="0" y1="0" x2="0.3" y2="1"><stop offset="0" stop-color="#9af500"/><stop offset="1" stop-color="#35bb3a"/></linearGradient>
   <linearGradient id="g2" x1="0" y1="0" x2="0.3" y2="1"><stop offset="0" stop-color="#62d21e"/><stop offset="1" stop-color="#1d9f3e"/></linearGradient>
   <linearGradient id="g3" x1="0" y1="0" x2="0" y2="1"><stop offset="0" stop-color="#3de3ff"/><stop offset="1" stop-color="#2f8cff"/></linearGradient>
   <linearGradient id="g4" x1="0" y1="0" x2="0" y2="1"><stop offset="0" stop-color="#1a7cf2"/><stop offset="1" stop-color="#2210a2"/></linearGradient>
  </defs>
  <path d="M3.9 22.9L12.4 20.2V44Q12.4 47.5 14 48.8H9.5Q3.9 46.5 3.9 41Z" fill="url(#g1)"/>
  <path d="M12 14.3L21.3 10.9V44Q21.3 47.5 23 48.8H18.5Q16.7 47.5 16.7 44V21.5L12 20.3Z" fill="url(#g2)"/>
  <path d="M24.8 9.6L34.9 5.8V43Q34.9 47 31 48.8H23.3Q24.8 46 24.8 42Z" fill="url(#g3)"/>
  <path d="M34.9 4.8H48V43Q48 47 44.2 48.8H38Q40.7 46 40.7 42V8.5L34.9 6.2Z" fill="url(#g4)"/>
 </svg>
 <div class="a" style="left:82px;top:247px;font-size:16.5px;line-height:20px;color:#555;white-space:nowrap">胖迪</div>
 <!-- bottom nav -->
 <div class="a" style="left:0;top:505px;width:328px;height:55px;background:#f7f7fa;border-top:1px solid #ececef"></div>
 <svg class="a" style="left:33px;top:512px" width="26" height="26" viewBox="0 0 26 26">
  <path d="M12.6 3.9Q13.4 3.4 14.2 3.9L22 9Q23.1 9.7 23.1 11V20.6Q23.1 23.1 20.6 23.1H6.3Q3.8 23.1 3.8 20.6V11Q3.8 9.7 4.9 9Z" fill="none" stroke="#141414" stroke-width="2.1" stroke-linejoin="round"/>
  <path d="M9.3 17.4H17.7" stroke="#141414" stroke-width="2.1" stroke-linecap="round"/>
 </svg>
 <div class="a" style="left:35px;top:542px;font-size:12px;line-height:15px;color:#5e5e5e;white-space:nowrap">首页</div>
 <svg class="a" style="left:127px;top:512px" width="26" height="26" viewBox="0 0 26 26">
  <rect x="2.7" y="3.5" width="9.3" height="9.3" rx="2.2" fill="#2c6cf6"/>
  <rect x="2.7" y="15" width="9.3" height="9.4" rx="2.2" fill="#2c6cf6"/>
  <rect x="13.8" y="15" width="9.5" height="9.4" rx="2.2" fill="#2c6cf6"/>
  <rect x="14.4" y="4.1" width="8.4" height="8.4" rx="1.8" fill="#2c6cf6" transform="rotate(45 18.6 8.3)"/>
 </svg>
 <div class="a" style="left:129px;top:542px;font-size:12px;line-height:15px;color:#3b6ef2;white-space:nowrap">版块</div>
 <svg class="a" style="left:221px;top:512px" width="26" height="26" viewBox="0 0 26 26">
  <path d="M5.4 12.6Q5.2 11.4 6.4 11.4H20.6Q21.8 11.4 21.6 12.6L20.3 20.2Q19.9 22.2 17.9 22.2H9.1Q7.1 22.2 6.7 20.2Z" fill="none" stroke="#141414" stroke-width="2" stroke-linejoin="round"/>
  <path d="M8 11.2Q7 7.4 8.8 6.2Q11.2 7 11.9 10.8" fill="none" stroke="#141414" stroke-width="1.9" stroke-linejoin="round"/>
  <path d="M13.4 11.2Q14.2 5.8 20.2 3.8Q20.8 8.6 18.2 11" fill="none" stroke="#141414" stroke-width="1.9" stroke-linejoin="round"/>
  <path d="M17.2 14.6L16.4 18.8" stroke="#141414" stroke-width="1.7" stroke-linecap="round"/>
 </svg>
 <div class="a" style="left:223px;top:542px;font-size:12px;line-height:15px;color:#5e5e5e;white-space:nowrap">发现</div>
 <svg class="a" style="left:316px;top:512px" width="26" height="26" viewBox="0 0 26 26">
  <circle cx="13" cy="8.5" r="4.6" fill="none" stroke="#141414" stroke-width="2"/>
  <path d="M3.6 22.4Q3.6 15.4 13 15.4Q22.4 15.4 22.4 22.4Z" fill="none" stroke="#141414" stroke-width="2" stroke-linejoin="round"/>
 </svg>
 <div class="a" style="left:317px;top:542px;font-size:12px;line-height:15px;color:#5e5e5e;white-space:nowrap">我的</div>
</div>

<div class="a" style="left:977px;top:120px;width:8px;height:568px;background:#272822"></div>
<div class="a" style="left:977px;top:210px;width:7px;height:470px;background:#858585"></div>
<div class="a" style="left:649px;top:680px;width:286px;height:8px;background:#858585"></div>
<!-- status bar -->
<div class="a" style="left:648px;top:13px;width:1px;height:675px;background:#131411"></div>
<!-- status bar -->
<div class="a" style="left:0;top:688px;width:988px;height:21px;background:#505050"></div>
<svg class="a" style="left:24px;top:692px" width="18" height="16" viewBox="0 0 18 16">
 <rect x="3.5" y="3.5" width="3" height="2.4" fill="none" stroke="#e0e0e0" stroke-width="1"/>
 <rect x="3.5" y="7.7" width="3" height="2.4" fill="none" stroke="#e0e0e0" stroke-width="1"/>
 <rect x="3.5" y="11.7" width="3" height="2.4" fill="none" stroke="#e0e0e0" stroke-width="1"/>
 <path d="M8 4.7H15.5M8 8.9H15.5M8 12.9H15.5" stroke="#e0e0e0" stroke-width="1.1"/>
</svg>
<svg class="a" style="left:50px;top:692px" width="18" height="16" viewBox="0 0 18 16">
 <rect x="3.5" y="3.2" width="12.4" height="10.8" fill="none" stroke="#e0e0e0" stroke-width="1.1"/>
 <path d="M6 6.2L8.4 8.2L6 10.2" fill="none" stroke="#e0e0e0" stroke-width="0.9"/>
 <path d="M9.5 10.8H12.6" stroke="#e0e0e0" stroke-width="1"/>
</svg>
<div class="a" style="left:489px;top:693px;font-size:13px;line-height:20px;color:#e6e6e6;white-space:nowrap">语法提示库</div>
<div class="a" style="left:580px;top:693px;font-size:13.5px;line-height:20px;color:#e6e6e6;white-space:nowrap">行:1</div>
<div class="a" style="left:614px;top:693px;font-size:13.5px;line-height:20px;color:#e6e6e6;white-space:nowrap">列:29 (17<span style="font-size:13px">字符被选择</span>)</div>
<div class="a" style="left:765px;top:693px;font-size:13.5px;line-height:20px;color:#e6e6e6;white-space:nowrap">UTF-8</div>
<div class="a" style="left:829px;top:693px;font-size:13.5px;line-height:20px;color:#e6e6e6;white-space:nowrap">JavaScript</div>
<svg class="a" style="left:912px;top:692px" width="22" height="17" viewBox="0 0 22 17">
 <circle cx="9.8" cy="10.1" r="6.6" fill="#f8f8f8"/>
 <path d="M9.8 7V13M7.6 10.9L9.8 13.1L12 10.9" fill="none" stroke="#505050" stroke-width="1.1"/>
 <circle cx="16" cy="5.7" r="4" fill="#f8f8f8"/>
 <circle cx="16" cy="5.7" r="3" fill="#e8380d"/>
</svg>
<svg class="a" style="left:944px;top:692px" width="18" height="17" viewBox="0 0 18 17">
 <path d="M9 2.2Q12.8 2.6 13.2 7.2V10.6L15 12.2H3L4.8 10.6V7.2Q5.2 2.6 9 2.2Z" fill="#a99f7e"/>
 <path d="M7.4 13.2H10.6L9 15Z" fill="#a99f7e"/>
</svg>

<!-- right strip -->
<div class="a" style="left:985px;top:0;width:3px;height:709px;background:#e4e4e4"></div>
<div class="a" style="left:985px;top:0;width:3px;height:6px;background:#6a4fc8"></div>
<div class="a" style="left:985px;top:688px;width:3px;height:21px;background:#5a5a5a"></div>
</body></html>
